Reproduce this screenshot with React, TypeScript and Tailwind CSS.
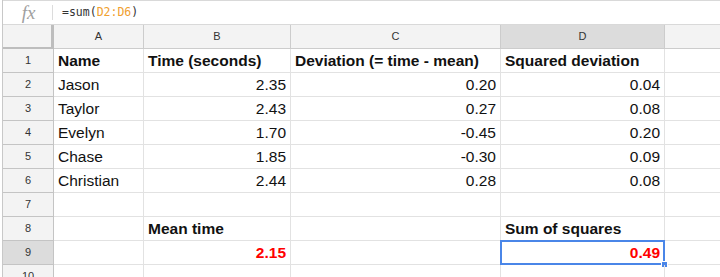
import React from "react";

type Cell = { t?: string; b?: boolean; r?: boolean; red?: boolean };

const rows: Cell[][] = [
  [{ t: "Name", b: true }, { t: "Time (seconds)", b: true }, { t: "Deviation (= time - mean)", b: true }, { t: "Squared deviation", b: true }],
  [{ t: "Jason" }, { t: "2.35", r: true }, { t: "0.20", r: true }, { t: "0.04", r: true }],
  [{ t: "Taylor" }, { t: "2.43", r: true }, { t: "0.27", r: true }, { t: "0.08", r: true }],
  [{ t: "Evelyn" }, { t: "1.70", r: true }, { t: "-0.45", r: true }, { t: "0.20", r: true }],
  [{ t: "Chase" }, { t: "1.85", r: true }, { t: "-0.30", r: true }, { t: "0.09", r: true }],
  [{ t: "Christian" }, { t: "2.44", r: true }, { t: "0.28", r: true }, { t: "0.08", r: true }],
  [{}, {}, {}, {}],
  [{}, { t: "Mean time", b: true }, {}, { t: "Sum of squares", b: true }],
  [{}, { t: "2.15", b: true, r: true, red: true }, {}, { t: "0.49", b: true, r: true, red: true }],
  [{}, {}, {}, {}],
];

const cols = ["A", "B", "C", "D"];

export default function App() {
  return (
    <div className="h-[277px] w-[720px] overflow-hidden bg-white" style={{ fontFamily: '"Liberation Sans", Arial, sans-serif' }}>
      <div className="ml-[2px] border-l border-[#c8c8c8] h-full">
        {/* formula bar */}
        <div className="flex h-[25px] items-center border-t border-b border-[#d9d9d9]">
          <div className="w-[49px] flex justify-center items-center">
            <span className="text-[19px] italic text-[#a0a0a0] leading-none pl-[2px]" style={{ fontFamily: '"Liberation Serif", serif' }}>
              fx
            </span>
          </div>
          <div className="h-[15px] w-px bg-[#dcdcdc]" />
          <div className="pl-[9px] text-[11.5px] text-[#333]" style={{ fontFamily: '"DejaVu Sans Mono", monospace' }}>
            =sum(<span className="text-[#f0a030]">D2:D6</span>)
          </div>
        </div>
        {/* grid */}
        <div className="grid grid-cols-[51px_90px_147px_210px_164px_1fr]">
          {/* header row */}
          <div className="h-[24px] bg-[#f3f3f3] border-r-[3px] border-b-[2px] border-[#bdbdbd]" />
          {cols.map((c) => (
            <div
              key={c}
              className={`h-[24px] flex items-center justify-center text-[11px] text-[#333] border-r border-b border-[#cccccc] ${c === "D" ? "bg-[#dcdcdc]" : "bg-[#f3f3f3]"}`}
            >
              {c}
            </div>
          ))}
          <div className="h-[24px] bg-[#f3f3f3] border-b border-[#cccccc]" />
          {rows.map((row, i) => (
            <React.Fragment key={i}>
              <div
                className={`h-[24px] flex items-center justify-center text-[11px] text-[#333] border-r border-b border-[#c4c4c4] ${i === 8 ? "bg-[#dcdcdc]" : "bg-[#f3f3f3]"}`}
              >
                {i + 1}
              </div>
              {row.map((cell, j) => {
                const selected = i === 8 && j === 3;
                return (
                  <div
                    key={j}
                    className={`relative h-[24px] flex items-center px-[4px] border-r border-b border-[#e2e2e2] text-[15.5px] whitespace-nowrap ${cell.r ? "justify-end" : "justify-start"} ${cell.b ? "font-bold" : ""} ${cell.red ? "text-[#ff0000]" : "text-[#111]"}`}
                  >
                    {cell.t}
                    {selected && (
                      <>
                        <div className="absolute -left-px -top-px -right-px -bottom-px border-2 border-[#4a86e8]" />
                        <div className="absolute -right-[4px] -bottom-[4px] w-[7px] h-[7px] bg-[#4a86e8] border border-white" />
                      </>
                    )}
                  </div>
                );
              })}
              <div className="h-[24px] border-b border-[#e2e2e2]" />
            </React.Fragment>
          ))}
        </div>
      </div>
    </div>
  );
}
